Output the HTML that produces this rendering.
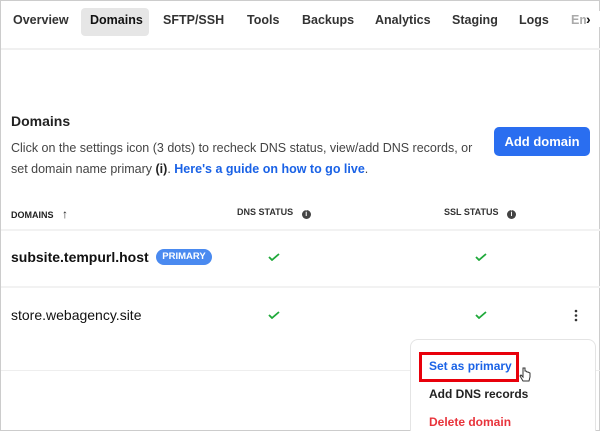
<!DOCTYPE html>
<html style="width:600px;height:431px;overflow:hidden"><head><style>
*{margin:0;padding:0;box-sizing:border-box}
body{width:600px;height:431px;overflow:hidden;background:#fff;font-family:"Liberation Sans",Arial,sans-serif;color:#222;position:relative;border:1px solid #ccc}
.a{position:absolute;white-space:nowrap}
.tab{position:absolute;top:12px;font-size:12.5px;color:#333;font-weight:bold}
.chk{position:absolute;width:12px;height:8px}
.i{display:inline-block;width:9px;height:9px;border-radius:50%;background:#444;margin-left:6px;vertical-align:-1px;color:#fff;font-size:7px;text-align:center;line-height:9px}
</style></head><body>
<div class="a" style="left:0;top:47px;width:600px;height:2px;background:#f0f0f0"></div>
<div class="a" style="left:80px;top:7px;width:68px;height:28px;background:#e6e6e6;border-radius:4px"></div>
<div class="tab" style="left:12px">Overview</div>
<div class="tab" style="left:89px;color:#111">Domains</div>
<div class="tab" style="left:162px">SFTP/SSH</div>
<div class="tab" style="left:246px">Tools</div>
<div class="tab" style="left:301px">Backups</div>
<div class="tab" style="left:374px">Analytics</div>
<div class="tab" style="left:451px">Staging</div>
<div class="tab" style="left:518px">Logs</div>
<div class="tab" style="left:570px;color:#aaa">Em</div>
<div class="a" style="left:585px;top:10px;font-size:14px;font-weight:bold;background:#fff;width:14px;color:#111">›</div>

<div class="a" style="left:10px;top:112px;font-size:14px;font-weight:bold;color:#222">Domains</div>
<div class="a" style="left:10px;top:137px;font-size:12.5px;color:#444;line-height:21px">Click on the settings icon (3 dots) to recheck DNS status, view/add DNS records, or<br>set domain name primary <b style="color:#222">(i)</b>. <span style="color:#1a62e6;font-weight:bold">Here's a guide on how to go live</span>.</div>
<div class="a" style="left:493px;top:126px;width:96px;height:29px;background:#2a6ef0;border-radius:5px;color:#fff;font-weight:bold;font-size:13px;text-align:center;line-height:29px">Add domain</div>

<div class="a" style="left:10px;top:206px;font-size:9px;font-weight:bold;color:#222">DOMAINS <span style="font-size:12px;margin-left:6px">↑</span></div>
<div class="a" style="left:236px;top:206px;font-size:9px;font-weight:bold;color:#333">DNS STATUS <span class="i">i</span></div>
<div class="a" style="left:443px;top:206px;font-size:9px;font-weight:bold;color:#333">SSL STATUS <span class="i">i</span></div>
<div class="a" style="left:0;top:228px;width:600px;height:2px;background:#f2f2f2"></div>

<div class="a" style="left:10px;top:248px;font-size:14px;font-weight:bold;color:#111">subsite.tempurl.host</div>
<div class="a" style="left:155px;top:248px;width:56px;height:16px;background:#4a8af0;border-radius:8px;color:#fff;font-size:9.5px;font-weight:bold;text-align:center;line-height:16px">PRIMARY</div>
<svg class="chk" style="left:267px;top:252px" viewBox="0 0 12 8"><path d="M1 4l3 3 7-6" stroke="#1fa93a" stroke-width="1.8" fill="none"/></svg>
<svg class="chk" style="left:474px;top:252px" viewBox="0 0 12 8"><path d="M1 4l3 3 7-6" stroke="#1fa93a" stroke-width="1.8" fill="none"/></svg>
<div class="a" style="left:0;top:285px;width:600px;height:2px;background:#f2f2f2"></div>

<div class="a" style="left:10px;top:306px;font-size:14px;color:#111">store.webagency.site</div>
<svg class="chk" style="left:267px;top:310px" viewBox="0 0 12 8"><path d="M1 4l3 3 7-6" stroke="#1fa93a" stroke-width="1.8" fill="none"/></svg>
<svg class="chk" style="left:474px;top:310px" viewBox="0 0 12 8"><path d="M1 4l3 3 7-6" stroke="#1fa93a" stroke-width="1.8" fill="none"/></svg>
<svg class="a" style="left:573px;top:308px" width="4" height="13"><circle cx="2" cy="2" r="1.3" fill="#333"/><circle cx="2" cy="6.5" r="1.3" fill="#333"/><circle cx="2" cy="11" r="1.3" fill="#333"/></svg>
<div class="a" style="left:0;top:369px;width:600px;height:1px;background:#eee"></div>

<div class="a" style="left:409px;top:338px;width:186px;height:92px;background:#fff;border:1px solid #e4e4e4;border-bottom:none;border-radius:8px 8px 0 0"></div>
<div class="a" style="left:418px;top:351px;width:100px;height:30px;border:3px solid #e8000b"></div>
<div class="a" style="left:428px;top:358px;font-size:12px;font-weight:bold;color:#1a62e6">Set as primary</div>
<div class="a" style="left:428px;top:386px;font-size:12px;font-weight:bold;color:#222">Add DNS records</div>
<div class="a" style="left:428px;top:414px;font-size:12px;font-weight:bold;color:#e8333b">Delete domain</div>
<svg class="a" style="left:518px;top:366px" width="12" height="17" viewBox="0 0 12 17"><path d="M4 1v9l-2-2-1 1 3 5h6l1-4v-4l-2-1-1 0-1-1-1 0V1z" fill="#fff" stroke="#333" stroke-width="1"/></svg>
</body></html>
